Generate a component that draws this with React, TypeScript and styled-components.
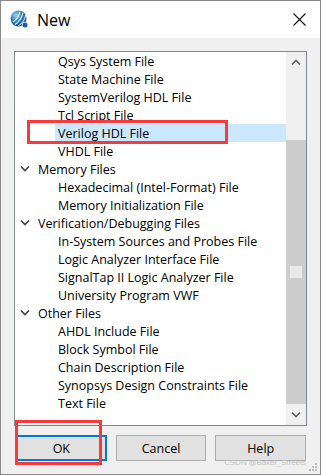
import styled, { createGlobalStyle } from "styled-components";

const GlobalStyle = createGlobalStyle`
  html, body {
    margin: 0;
    padding: 0;
    background: #ffffff;
  }
  * {
    box-sizing: border-box;
  }
`;

const Window = styled.div`
  position: relative;
  width: 321px;
  height: 475px;
  border: 1px solid #8a8a8a;
  background: #f0f0f0;
  display: flex;
  flex-direction: column;
  font-family: "Open Sans", "Liberation Sans", Arial, sans-serif;
  color: #000;
  overflow: hidden;
`;

const TitleBar = styled.div`
  height: 37px;
  background: #ffffff;
  display: flex;
  align-items: center;
  padding-left: 9px;
  padding-right: 14px;
  gap: 8px;
`;

const Title = styled.span`
  flex: 1;
  font-size: 16px;
  padding-top: 1px;
`;

const Body = styled.div`
  flex: 1;
  display: flex;
  flex-direction: column;
  padding: 13px 14px 0 13px;
`;

const ListBox = styled.div`
  width: 293px;
  height: 375px;
  border: 1px solid #828790;
  background: #ffffff;
  display: flex;
`;

const Rows = styled.div`
  flex: 1;
  display: flex;
  flex-direction: column;
`;

const GroupRow = styled.div`
  height: 18px;
  display: flex;
  align-items: center;
  padding-left: 5px;
  gap: 8px;
  font-size: 12.5px;
  white-space: nowrap;
`;

const ItemRow = styled.div<{ $selected?: boolean }>`
  height: 18px;
  display: flex;
  align-items: center;
  margin-left: 40px;
  padding-left: 3px;
  font-size: 12.5px;
  white-space: nowrap;
  background: ${(p) => (p.$selected ? "#cce8ff" : "transparent")};
`;

const ScrollBar = styled.div`
  width: 20px;
  background: #f0f0f0;
  display: flex;
  flex-direction: column;
`;

const ScrollArrow = styled.div<{ $h: number }>`
  height: ${(p) => p.$h}px;
  display: flex;
  align-items: center;
  justify-content: center;
`;

const ScrollTrack = styled.div`
  height: 68px;
`;

const ScrollThumb = styled.div`
  height: 264px;
  background: #cdcdcd;
  display: flex;
  align-items: center;
  justify-content: center;
`;

const Gripper = styled.div`
  width: 12px;
  height: 12px;
  background: #e9e9e9;
`;

const ButtonRow = styled.div`
  display: flex;
  gap: 9px;
  margin-top: 9px;
  padding-left: 2px;
`;

const Button = styled.div<{ $default?: boolean }>`
  width: 91px;
  height: 26px;
  display: flex;
  align-items: center;
  justify-content: center;
  background: #e1e1e1;
  border: ${(p) => (p.$default ? "2px solid #0078d7" : "1px solid #adadad")};
  font-size: 12.5px;
`;

const Annotation = styled.div<{ $x: number; $y: number; $w: number; $h: number }>`
  position: absolute;
  left: ${(p) => p.$x}px;
  top: ${(p) => p.$y}px;
  width: ${(p) => p.$w}px;
  height: ${(p) => p.$h}px;
  border: 3px solid #fa3a3a;
  pointer-events: none;
`;

const Watermark = styled.span`
  position: absolute;
  right: 14px;
  bottom: 7px;
  font-family: "Liberation Sans", Arial, sans-serif;
  font-size: 8px;
  color: #c4c4c4;
  letter-spacing: -0.1px;
`;

const SizeGrip = styled.svg`
  position: absolute;
  right: 2px;
  bottom: 2px;
`;

function AppIcon() {
  return (
    <svg width="19" height="19" viewBox="0 0 19 19">
      <defs>
        <radialGradient id="globe" cx="35%" cy="30%" r="70%">
          <stop offset="0%" stopColor="#9fd0f5" />
          <stop offset="55%" stopColor="#2c7fc8" />
          <stop offset="100%" stopColor="#10467e" />
        </radialGradient>
      </defs>
      <circle cx="8.5" cy="8.5" r="8" fill="url(#globe)" />
      <path d="M3 12 C6 10 9 6 10 1.5" stroke="#fff" strokeWidth="1.1" fill="none" />
      <path d="M5 14.5 C9 12 12 8 13 2.5" stroke="#fff" strokeWidth="1.1" fill="none" />
      <path d="M8 16 C12 13.5 15 10 15.5 5" stroke="#fff" strokeWidth="1" fill="none" />
      <circle cx="15" cy="15" r="3" fill="#1d5fa8" stroke="#fff" strokeWidth="0.8" />
    </svg>
  );
}

function CloseIcon() {
  return (
    <svg width="13" height="13" viewBox="0 0 13 13">
      <path d="M0.5 0.5 L12.5 12.5 M12.5 0.5 L0.5 12.5" stroke="#111" strokeWidth="1.1" />
    </svg>
  );
}

function Chevron({ up = false, color = "#444" }: { up?: boolean; color?: string }) {
  return (
    <svg width="10" height="6" viewBox="0 0 10 6">
      <path
        d={up ? "M1 5.5 L5 1.5 L9 5.5" : "M1 0.5 L5 4.5 L9 0.5"}
        stroke={color}
        strokeWidth="1.6"
        fill="none"
      />
    </svg>
  );
}

type Entry = { label: string; group?: boolean; selected?: boolean };

const entries: Entry[] = [
  { label: "Qsys System File" },
  { label: "State Machine File" },
  { label: "SystemVerilog HDL File" },
  { label: "Tcl Script File" },
  { label: "Verilog HDL File", selected: true },
  { label: "VHDL File" },
  { label: "Memory Files", group: true },
  { label: "Hexadecimal (Intel-Format) File" },
  { label: "Memory Initialization File" },
  { label: "Verification/Debugging Files", group: true },
  { label: "In-System Sources and Probes File" },
  { label: "Logic Analyzer Interface File" },
  { label: "SignalTap II Logic Analyzer File" },
  { label: "University Program VWF" },
  { label: "Other Files", group: true },
  { label: "AHDL Include File" },
  { label: "Block Symbol File" },
  { label: "Chain Description File" },
  { label: "Synopsys Design Constraints File" },
  { label: "Text File" },
];

export default function App() {
  return (
    <>
      <GlobalStyle />
      <Window>
        <TitleBar>
          <AppIcon />
          <Title>New</Title>
          <CloseIcon />
        </TitleBar>
        <Body>
          <ListBox>
            <Rows>
              {entries.map((e) =>
                e.group ? (
                  <GroupRow key={e.label}>
                    <Chevron />
                    <span>{e.label}</span>
                  </GroupRow>
                ) : (
                  <ItemRow key={e.label} $selected={e.selected}>
                    {e.label}
                  </ItemRow>
                )
              )}
            </Rows>
            <ScrollBar>
              <ScrollArrow $h={20}>
                <Chevron up color="#606060" />
              </ScrollArrow>
              <ScrollTrack />
              <ScrollThumb>
                <Gripper />
              </ScrollThumb>
              <ScrollArrow $h={21}>
                <Chevron color="#606060" />
              </ScrollArrow>
            </ScrollBar>
          </ListBox>
          <ButtonRow>
            <Button $default>OK</Button>
            <Button>Cancel</Button>
            <Button>Help</Button>
          </ButtonRow>
        </Body>
        <Annotation $x={26} $y={119} $w={201} $h={24} />
        <Annotation $x={14} $y={419} $w={87} $h={45} />
        <Watermark>CSDN @Baker_Streets</Watermark>
        <SizeGrip width="10" height="10" viewBox="0 0 10 10">
          <rect x="7" y="1" width="2" height="2" fill="#bdbdbd" />
          <rect x="4" y="4" width="2" height="2" fill="#bdbdbd" />
          <rect x="7" y="4" width="2" height="2" fill="#bdbdbd" />
          <rect x="1" y="7" width="2" height="2" fill="#bdbdbd" />
          <rect x="4" y="7" width="2" height="2" fill="#bdbdbd" />
          <rect x="7" y="7" width="2" height="2" fill="#bdbdbd" />
        </SizeGrip>
      </Window>
    </>
  );
}
